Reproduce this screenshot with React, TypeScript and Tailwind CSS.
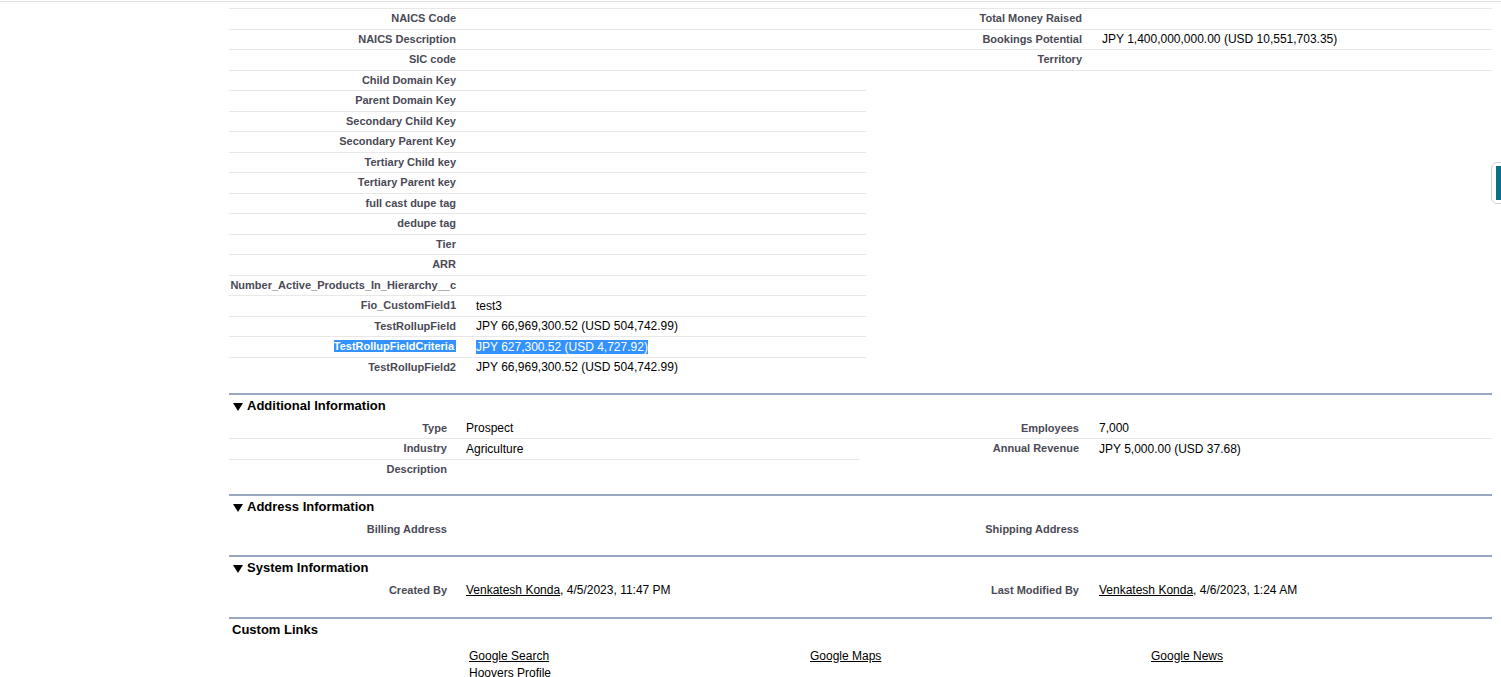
import React from 'react';

type Field = { label: string; value?: React.ReactNode; selected?: boolean };

const mainLeft: Field[] = [
  { label: 'NAICS Code' },
  { label: 'NAICS Description' },
  { label: 'SIC code' },
  { label: 'Child Domain Key' },
  { label: 'Parent Domain Key' },
  { label: 'Secondary Child Key' },
  { label: 'Secondary Parent Key' },
  { label: 'Tertiary Child key' },
  { label: 'Tertiary Parent key' },
  { label: 'full cast dupe tag' },
  { label: 'dedupe tag' },
  { label: 'Tier' },
  { label: 'ARR' },
  { label: 'Number_Active_Products_In_Hierarchy__c' },
  { label: 'Fio_CustomField1', value: 'test3' },
  { label: 'TestRollupField', value: 'JPY 66,969,300.52 (USD 504,742.99)' },
  { label: 'TestRollupFieldCriteria', value: 'JPY 627,300.52 (USD 4,727.92)', selected: true },
  { label: 'TestRollupField2', value: 'JPY 66,969,300.52 (USD 504,742.99)' },
];

const mainRight: Field[] = [
  { label: 'Total Money Raised' },
  { label: 'Bookings Potential', value: 'JPY 1,400,000,000.00 (USD 10,551,703.35)' },
  { label: 'Territory' },
];

const userLink = (date: string) => (
  <>
    <a className="underline text-black cursor-pointer">Venkatesh Konda</a>, {date}
  </>
);

const Row = ({
  field,
  labelClass,
  valueClass,
  border,
}: {
  field: Field;
  labelClass: string;
  valueClass: string;
  border: boolean;
}) => (
  <div className={`flex h-[20.5px] ${border ? 'border-b border-[#e8e8e8]' : ''}`}>
    <div className={`${labelClass} shrink-0 pr-[10px] pt-[2px] text-right text-[11px] font-bold leading-[14px] text-[#4a4a56] whitespace-nowrap`}>
      {field.selected ? <span className="bg-[#3392fd] pr-[2px] text-white">{field.label}</span> : field.label}
    </div>
    <div className={`${valueClass} pt-[2.5px] text-[12px] leading-[15px] text-black whitespace-nowrap`}>
      {field.selected ? <span className="bg-[#3392fd] text-white">{field.value}</span> : field.value}
    </div>
  </div>
);

const Column = ({
  fields,
  className,
  labelClass,
  valueClass = 'pl-[10px]',
  borderLast = false,
}: {
  fields: Field[];
  className: string;
  labelClass: string;
  valueClass?: string;
  borderLast?: boolean;
}) => (
  <div className={className}>
    {fields.map((f, i) => (
      <Row
        key={f.label}
        field={f}
        labelClass={labelClass}
        valueClass={valueClass}
        border={borderLast || i < fields.length - 1}
      />
    ))}
  </div>
);

const Triangle = () => (
  <svg width="10" height="8" viewBox="0 0 10 8" className="mx-[4px] mt-[1px] shrink-0">
    <polygon points="0,0 10,0 5,8" fill="#000" />
  </svg>
);

const Section = ({ title, children, className }: { title: string; children: React.ReactNode; className: string }) => (
  <div className={className}>
    <div className="h-[25.5px] border-t-2 border-[#98a6be] pt-[3px]">
      <div className="flex items-center text-[13px] font-bold leading-[16px] text-black">
        <Triangle />
        {title}
      </div>
    </div>
    <div className="flex">{children}</div>
  </div>
);

export default function App() {
  return (
    <div className="relative h-[677px] w-[1501px] overflow-hidden bg-white font-['Liberation_Sans',Arial,sans-serif]">
      <div className="mt-px h-px bg-[#e2e2e2]" />

      <div className="ml-[229px] w-[1263px]">
        <div className="mt-[6px] mb-[15px] flex">
          <Column fields={mainLeft} className="w-[637px] border-t border-[#e8e8e8]" labelClass="w-[237px]" />
          <Column
            fields={mainRight}
            className="w-[626px] self-start border-t border-[#e8e8e8]"
            labelClass="w-[226px]"
            borderLast
          />
        </div>

        <Section title="Additional Information" className="mb-[14px]">
          <Column
            fields={[{ label: 'Type', value: 'Prospect' }, { label: 'Industry', value: 'Agriculture' }, { label: 'Description' }]}
            className="w-[631px]"
            labelClass="w-[228px]"
            valueClass="pl-[9px]"
          />
          <Column
            fields={[{ label: 'Employees', value: '7,000' }, { label: 'Annual Revenue', value: 'JPY 5,000.00 (USD 37.68)' }]}
            className="w-[632px] self-start"
            labelClass="w-[229px]"
          />
        </Section>

        <Section title="Address Information" className="mb-[15px]">
          <Column fields={[{ label: 'Billing Address' }]} className="w-[631px]" labelClass="w-[228px]" valueClass="pl-[9px]" />
          <Column fields={[{ label: 'Shipping Address' }]} className="w-[632px]" labelClass="w-[229px]" />
        </Section>

        <Section title="System Information" className="mb-[16px]">
          <Column
            fields={[{ label: 'Created By', value: userLink('4/5/2023, 11:47 PM') }]}
            className="w-[631px]"
            labelClass="w-[228px]"
            valueClass="pl-[9px]"
          />
          <Column
            fields={[{ label: 'Last Modified By', value: userLink('4/6/2023, 1:24 AM') }]}
            className="w-[632px]"
            labelClass="w-[229px]"
          />
        </Section>

        <div className="border-t-2 border-[#98a6be]">
          <div className="h-[28.5px] pt-[3px] pl-[3px] text-[13px] font-bold leading-[16px] text-black">Custom Links</div>
          <div className="grid grid-cols-[341px_341px_341px] pl-[240px] text-[12px] leading-[17px] text-black">
            <a className="underline cursor-pointer">Google Search</a>
            <a className="underline cursor-pointer">Google Maps</a>
            <a className="underline cursor-pointer">Google News</a>
            <a className="underline cursor-pointer">Hoovers Profile</a>
          </div>
        </div>
      </div>

      <div className="absolute left-[1491px] top-[162px] h-[42px] w-[16px] rounded-l-[6px] border border-[#cfcfcf] bg-white">
        <div className="absolute left-[4px] top-[3px] h-[34px] w-[12px] bg-[#0b6f88]" />
      </div>
    </div>
  );
}
